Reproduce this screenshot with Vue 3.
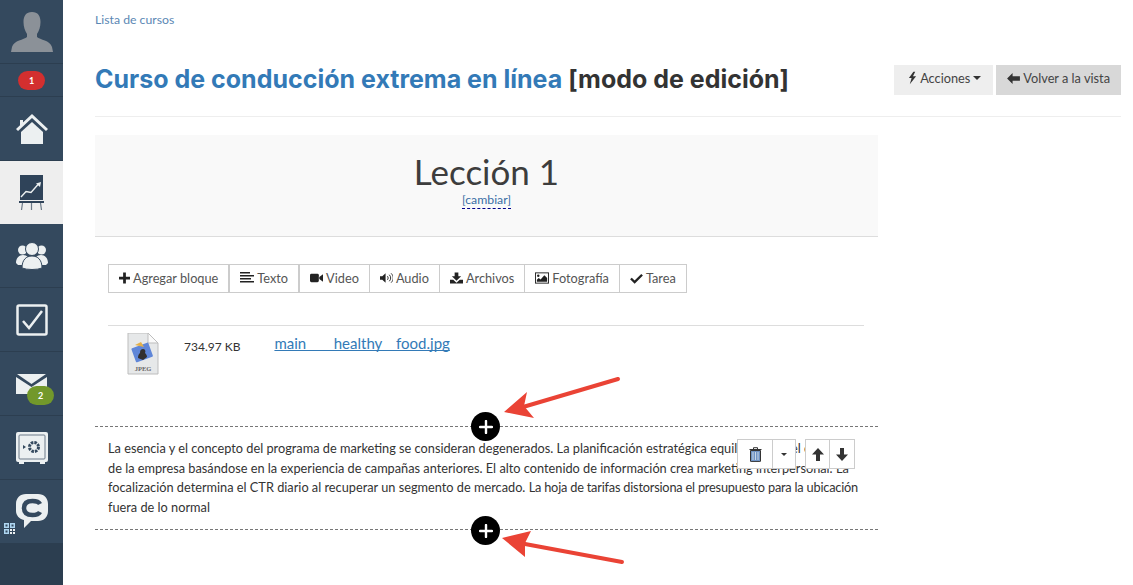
<template>
  <div class="page">
    <aside class="sidebar">
      <div class="side-item side-avatar">
        <svg viewBox="0 0 42 40" width="42" height="40">
          <path d="M21 0c-6 0-8.500 4-8.500 10 0 5 1.500 9 3.500 12v3c-3 3-13 3-15 10l-1 5h42l-1-5c-2-7-12-7-15-10v-3c2-3 3.500-7 3.500-12 0-6-2.500-10-8.500-10z" fill="#8b9198"/>
        </svg>
      </div>
      <div class="side-item side-badge-row"><span class="badge badge-red">1</span></div>
      <div class="side-item">
        <svg viewBox="0 0 32 32" width="32" height="32">
          <path d="M0 16 16 1l16 15-2 2L16 5 2 18z" fill="#ecf0f1"/>
          <path d="M4 7h3v3l-3 3z" fill="#ecf0f1"/>
          <path d="M5 19 16 9l11 10v12H5z" fill="#ecf0f1"/>
        </svg>
      </div>
      <div class="side-item is-active">
        <svg viewBox="0 0 25 35" width="25" height="35">
          <rect x="1" y="0" width="23" height="25" fill="#2f4359"/>
          <path d="M2 22l5-5.500 5 1 7-8" fill="none" stroke="#ecf0f1" stroke-width="1.400"/>
          <path d="M17 8.500l5-1.500-1 5z" fill="#ecf0f1"/>
          <rect x="0" y="26" width="25" height="2" fill="#2f4359"/>
          <path d="M3.500 28 2.500 35M12.500 28v7M21.500 28l1 7" stroke="#6c7a89" stroke-width="1.200"/>
        </svg>
      </div>
      <div class="side-item">
        <svg viewBox="0 0 32 28" width="32" height="28">
          <circle cx="6.500" cy="8" r="4.500" fill="#ecf0f1"/>
          <circle cx="25.500" cy="8" r="4.500" fill="#ecf0f1"/>
          <path d="M0 21c0-5 3-8 7-8s7 3 7 8l-5 2H2zM18 21c0-5 3-8 7-8s7 3 7 8l-2 2h-7z" fill="#ecf0f1"/>
          <circle cx="16" cy="7" r="6.500" fill="#ecf0f1" stroke="#34495e"/>
          <path d="M6 26c0-8 4-12 10-12s10 4 10 12c-5 2-15 2-20 0z" fill="#ecf0f1" stroke="#34495e"/>
        </svg>
      </div>
      <div class="side-item">
        <svg viewBox="0 0 32 32" width="32" height="32">
          <rect x="1.500" y="1.500" width="29" height="29" rx="1.500" fill="none" stroke="#ecf0f1" stroke-width="2.500"/>
          <path d="M7 17l6 7L26 7" fill="none" stroke="#ecf0f1" stroke-width="2.500"/>
        </svg>
      </div>
      <div class="side-item side-mail">
        <svg viewBox="0 0 31 20" width="31" height="20">
          <path d="M0 3v17h31V3L15.500 13z" fill="#ecf0f1"/>
          <path d="M1 0h29L15.500 10z" fill="#ecf0f1"/>
        </svg>
        <span class="badge badge-green">2</span>
      </div>
      <div class="side-item">
        <svg viewBox="0 0 32 32" width="32" height="32">
          <rect x="0" y="0" width="32" height="30" rx="2" fill="#ecf0f1"/>
          <rect x="3" y="3" width="26" height="24" rx="1" fill="none" stroke="#6c7a89"/>
          <rect x="3" y="30" width="5" height="2" fill="#ecf0f1"/>
          <rect x="24" y="30" width="5" height="2" fill="#ecf0f1"/>
          <circle cx="18" cy="15" r="4.500" fill="none" stroke="#34495e" stroke-width="3" stroke-dasharray="2.500 1"/>
          <path d="M7 13l3 2-3 2z" fill="#34495e"/>
        </svg>
      </div>
      <div class="side-item side-chat">
        <svg viewBox="0 0 32 35" width="32" height="35">
          <path d="M10 0h12c6 0 10 4 10 10v7c0 6-4 10-10 10H15l-7 7v-8c-5-1-8-5-8-9v-7C0 4 4 0 10 0z" fill="#ecf0f1"/>
          <path d="M24 10c-1-2-3.500-3-7.500-3C11 7 8 9.500 8 14s3 7 8.500 7c4 0 6.500-1 7.500-3" fill="none" stroke="#34495e" stroke-width="4.500"/>
        </svg>
        <svg class="qr" viewBox="0 0 11 11" width="11" height="11">
          <path d="M0 0h5v5H0zM6 0h5v5H6zM0 6h5v5H0z" fill="#aed6f1"/>
          <path d="M1.500 1.500h2v2h-2zM7.500 1.500h2v2h-2zM1.500 7.500h2v2h-2z" fill="#34495e"/>
          <path d="M6 6h2v2H6zM9 6h2v2H9zM6 9h2v2H6zM9 9h2v2H9z" fill="#ecf0f1"/>
        </svg>
      </div>
    </aside>

    <main class="content">
      <a class="crumb">Lista de cursos</a>
      <header class="head">
        <h1 class="title"><a>Curso de conducción extrema en línea</a> [modo de edición]</h1>
        <div class="head-actions">
          <button class="btn btn-light">
            <svg viewBox="0 0 10 14" width="9" height="14"><path d="M6 0 1 7h3l-2 7 7-9H5.500L8 0z" fill="#333"/></svg>
            Acciones <i class="caret"></i>
          </button>
          <button class="btn btn-gray">
            <svg viewBox="0 0 14 12" width="13" height="11"><path d="M6 0v3.500h8v5H6V12L0 6z" fill="#333"/></svg>
            Volver a la vista
          </button>
        </div>
      </header>

      <section class="editor">
        <div class="lesson">
          <div class="lesson-name">Lección 1</div>
          <a class="lesson-change">[cambiar]</a>
        </div>

        <div class="toolbar">
          <button v-for="t in tools" :key="t.label" class="tool">
            <svg :viewBox="t.box" :width="t.w" height="12" v-html="t.icon"></svg>
            {{ t.label }}
          </button>
        </div>

        <div class="file-row">
          <svg class="file-icon" viewBox="0 0 32 42" width="32" height="42">
            <path d="M1 0h20l10 10v31H1z" fill="#e6e8e9" stroke="#bdbdbd"/>
            <path d="M21 0v10h10z" fill="#fafafa" stroke="#bdbdbd"/>
            <rect x="6" y="12" width="18" height="15" rx="1" fill="#5f86d8" transform="rotate(-20 15 19)"/>
            <path d="M8 12l6-3 3 5z" fill="#e3b04b"/>
            <path d="M11 25c0-3 1-4 2-5 0-3 1-4 3-4s3 2 2 4c1 1 2 2 2 4l-4 3z" fill="#33302e"/>
            <text x="16" y="38" text-anchor="middle" class="jpeg">JPEG</text>
          </svg>
          <span class="file-size">734.97 KB</span>
          <a class="file-link">main____healthy__food.jpg</a>
        </div>

        <div class="block">
          <span class="add-btn">
            <svg viewBox="0 0 14 14" width="14" height="14"><path d="M7 1v12M1 7h12" stroke="#fff" stroke-width="2.400" stroke-linecap="round"/></svg>
          </span>
          <p class="block-text">La esencia y el concepto del programa de marketing se consideran degenerados. La planificación estratégica equilibra todo el estilo<br>de la empresa basándose en la experiencia de campañas anteriores. El alto contenido de información crea marketing interpersonal. La<br>focalización determina el CTR diario al recuperar un segmento de mercado. <span class="tight">La hoja de tarifas distorsiona el presupuesto para la ubicación</span><br>fuera de lo normal</p>
          <div class="block-tools">
            <button class="mini mini-trash">
              <svg viewBox="0 0 13 15" width="13" height="15">
                <path d="M0.500 2.500h12M4.500 2.500V.7h4v1.800" fill="none" stroke="#333"/>
                <path d="M1.500 3.500h10V14a.6.6 0 0 1-.6.6H2.100a.6.6 0 0 1-.6-.6z" fill="#6f93c4" stroke="#333"/>
                <path d="M4 5v8M6.500 5v8M9 5v8" stroke="#c9d6e6"/>
              </svg>
            </button>
            <button class="mini mini-caret"><i class="caret"></i></button>
            <span class="mini-gap"></span>
            <button class="mini mini-arrow">
              <svg viewBox="0 0 12 13" width="12" height="13"><path d="M6 0l6 6.500H8V13H4V6.500H0z" fill="#333"/></svg>
            </button>
            <button class="mini mini-arrow">
              <svg viewBox="0 0 12 13" width="12" height="13"><path d="M6 13 0 6.500h4V0h4v6.500h4z" fill="#333"/></svg>
            </button>
          </div>
        </div>
        <span class="add-btn add-last">
          <svg viewBox="0 0 14 14" width="14" height="14"><path d="M7 1v12M1 7h12" stroke="#fff" stroke-width="2.400" stroke-linecap="round"/></svg>
        </span>
      </section>

      <svg class="arrow arrow-top" viewBox="0 0 120 50" width="120" height="50">
        <path d="M117 5 22 33" stroke="#ea4335" stroke-width="4" stroke-linecap="round"/>
        <path d="M3 38 26 18l-3 14 10 12z" fill="#ea4335"/>
      </svg>
      <svg class="arrow arrow-bottom" viewBox="0 0 124 40" width="124" height="40">
        <path d="M121 32 24 14" stroke="#ea4335" stroke-width="4" stroke-linecap="round"/>
        <path d="M1 8 30 1l-6 12 0 14z" fill="#ea4335"/>
      </svg>
    </main>
  </div>
</template>

<script setup>
const tools = [
  { label: 'Agregar bloque', box: '0 0 12 12', w: 11, icon: '<path d="M4.500 0h3v4.500H12v3H7.500V12h-3V7.500H0v-3h4.500z" fill="#222"/>' },
  { label: 'Texto', box: '0 0 14 12', w: 14, icon: '<path d="M0 0h10v1.500H0zM0 3h14v1.500H0zM0 6h11v1.500H0zM0 9h14v1.500H0z" fill="#222"/>' },
  { label: 'Video', box: '0 0 14 12', w: 13, icon: '<rect x="0" y="1.500" width="9.500" height="9" rx="1.500" fill="#222"/><path d="M10 5l4-3v8l-4-3z" fill="#222"/>' },
  { label: 'Audio', box: '0 0 14 12', w: 13, icon: '<path d="M0 4h2.500L6 1v10L2.500 8H0z" fill="#222"/><path d="M8 4c1 1 1 3 0 4M10 2.500c2 2 2 5 0 7M12 1c3 3 3 7 0 10" fill="none" stroke="#222"/>' },
  { label: 'Archivos', box: '0 0 14 12', w: 13, icon: '<path d="M5 0h4v4h3L7 9 2 4h3z" fill="#222"/><path d="M0 8h3.500L7 11l3.500-3H14v4H0z" fill="#222"/>' },
  { label: 'Fotografía', box: '0 0 15 12', w: 14, icon: '<rect x=".5" y=".5" width="14" height="11" fill="#fff" stroke="#222"/><circle cx="3.500" cy="3.500" r="1.300" fill="#222"/><path d="M2 10V8l2-2 2 1.500L10 3l3 3v4z" fill="#222"/>' },
  { label: 'Tarea', box: '0 0 14 12', w: 13, icon: '<path d="M1 6.500 5 10.500 13 2.500" fill="none" stroke="#222" stroke-width="2.500"/>' }
]
</script>

<style>
html, body { margin: 0; background: #fff; }
</style>

<style scoped>
.page {
  display: flex;
  height: 585px;
  overflow: hidden;
  font-family: Lato, "Open Sans", sans-serif;
  color: #333;
}

.sidebar {
  width: 63px;
  flex-shrink: 0;
  background: #2c3e50;
  height: 585px;
}

.side-item {
  position: relative;
  display: flex;
  align-items: center;
  justify-content: center;
  height: 63px;
  background: #34495e;
  border-bottom: 1px solid #2c3e50;
}

.side-item.is-active {
  height: 63px;
  background: #eee;
  border-bottom: 0;
}

.side-avatar {
  align-items: flex-start;
  height: 51px;
  padding-top: 12px;
}

.side-badge-row {
  height: 32px;
}

.badge {
  display: block;
  width: 27px;
  height: 19px;
  line-height: 19px;
  border-radius: 10px;
  color: #fff;
  font-size: 9px;
  font-weight: 700;
  text-align: center;
}

.badge-red {
  background: #d32f2f;
}

.badge-green {
  position: absolute;
  left: 27px;
  top: 34px;
  background: #72982b;
}

.qr {
  position: absolute;
  left: 4px;
  top: 43px;
}

.content {
  position: relative;
  flex: 1;
  padding: 0 12px 0 32px;
  min-width: 0;
}

.crumb {
  display: block;
  padding-top: 12px;
  font-size: 12.25px;
  line-height: 15px;
  color: #5b87b4;
}

.head {
  display: flex;
  justify-content: space-between;
  align-items: flex-start;
  height: 89px;
  border-bottom: 1px solid #eee;
  margin-bottom: 18px;
}

.title {
  margin: 37px 0 0;
  font-family: Inter, Lato, sans-serif;
  font-size: 25px;
  line-height: 30px;
  font-weight: 700;
  color: #333;
  white-space: nowrap;
}

.title a {
  color: #337ab7;
}

.head-actions {
  display: flex;
  gap: 3px;
  margin-top: 38px;
}

.btn {
  height: 30px;
  border: 0;
  padding: 0 11px 4px;
  font: inherit;
  font-size: 12.75px;
  color: #444;
  display: flex;
  align-items: center;
  gap: 3px;
}

.btn-light {
  background: #eee;
  padding-left: 14px;
  padding-right: 12px;
}

.btn-gray {
  background: #d8d8d8;
}

.caret {
  display: inline-block;
  width: 0;
  height: 0;
  border-left: 4px solid transparent;
  border-right: 4px solid transparent;
  border-top: 4px solid #333;
  vertical-align: middle;
}

.editor {
  position: relative;
  width: 783px;
}

.lesson {
  height: 101px;
  background: #f9f9f9;
  border-bottom: 1px solid #ddd;
  text-align: center;
}

.lesson-name {
  padding-top: 15px;
  font-size: 35px;
  line-height: 42px;
  color: #3d3d3d;
}

.lesson-change {
  display: block;
  width: fit-content;
  margin: 0 auto;
  font-size: 12.25px;
  line-height: 16px;
  color: #3a6ea5;
  border-bottom: 1px dashed #00008b;
}

.toolbar {
  display: flex;
  margin: 27px 0 0 13px;
}

.tool {
  height: 29px;
  padding: 0 10px 2px;
  margin-left: -1px;
  background: #fff;
  border: 1px solid #ccc;
  font: inherit;
  font-size: 12.75px;
  color: #555;
  display: flex;
  align-items: center;
  gap: 3px;
  white-space: nowrap;
}

.tool:nth-child(-n + 3) {
  margin-left: 0;
}

.tool svg {
  flex-shrink: 0;
}

.file-row {
  display: flex;
  align-items: flex-start;
  height: 101px;
  margin: 32px 14px 0 13px;
  border-top: 1px solid #ddd;
  padding: 7px 0 0 19px;
  box-sizing: border-box;
}

.file-size {
  margin-left: 25px;
  padding-top: 4px;
  font-size: 12px;
  line-height: 20px;
}

.file-link {
  margin-left: 34px;
  font-size: 15px;
  line-height: 20px;
  color: #337ab7;
  text-decoration: underline;
  text-decoration-skip-ink: none;
}

.jpeg {
  font-size: 6.5px;
  font-weight: 700;
  font-family: "Liberation Serif", serif;
  fill: #666;
}

.block {
  position: relative;
  border-top: 1px dashed #777;
  border-bottom: 1px dashed #777;
  height: 102px;
}

.block-text {
  margin: 12px 0 0 13px;
  font-size: 12.75px;
  line-height: 19.5px;
  white-space: nowrap;
}

.tight {
  letter-spacing: -0.2px;
}

.add-btn {
  position: absolute;
  left: 376px;
  top: -15px;
  width: 29px;
  height: 29px;
  border-radius: 50%;
  background: #000;
  display: flex;
  align-items: center;
  justify-content: center;
}

.add-last {
  top: auto;
  bottom: -15px;
}

.block-tools {
  position: absolute;
  left: 642px;
  top: 12px;
  display: flex;
  height: 30px;
}

.mini {
  padding: 0;
  background: #fff;
  border: 1px solid #ccc;
  display: flex;
  align-items: center;
  justify-content: center;
}

.mini-trash {
  width: 36px;
}

.mini-caret {
  width: 24px;
  margin-left: -1px;
}

.mini-caret .caret {
  border-left-width: 3px;
  border-right-width: 3px;
  border-top-width: 3px;
}

.mini-gap {
  width: 9px;
}

.mini-arrow {
  width: 25px;
}

.mini-arrow + .mini-arrow {
  width: 26px;
  margin-left: -1px;
}

.arrow {
  position: absolute;
}

.arrow-top {
  left: 438px;
  top: 374px;
}

.arrow-bottom {
  left: 438px;
  top: 530px;
}
</style>
